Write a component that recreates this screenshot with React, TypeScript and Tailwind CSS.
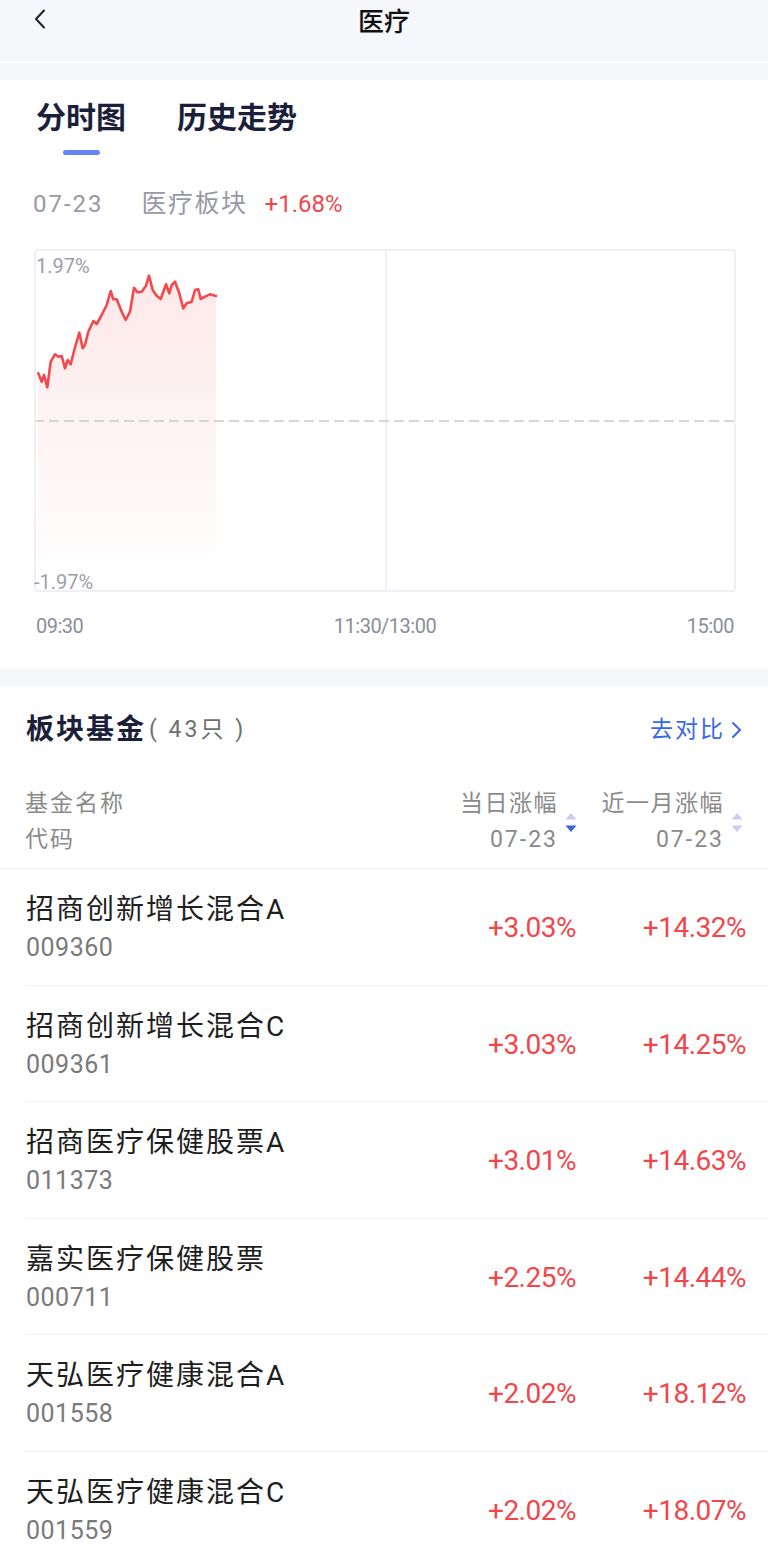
import React from "react";

const FONT = 'Roboto, "Noto Sans CJK SC", sans-serif';

const line: [number, number][] = [
  [38.3, 373.3], [41.7, 381.7], [44, 375], [47.3, 387.3], [50.7, 361.7], [55, 354.3],
  [58.3, 356.7], [61.7, 356], [65, 368.3], [67.7, 360], [70.7, 364.3], [75, 347.3],
  [79.3, 332.7], [82.7, 348.3], [85, 345], [88.3, 331.7], [93.3, 321], [96.7, 324],
  [101.7, 315], [106.7, 305], [110.7, 291], [113.3, 299.3], [116.7, 299.3], [121.7, 311.7],
  [125.7, 320], [130, 311.7], [134, 287.7], [137.3, 292.3], [141.7, 291.7], [146, 285.7],
  [149, 275.7], [152.7, 290], [156.7, 295.7], [160.7, 299], [166, 284.3], [169.3, 293.3],
  [171.7, 285], [175, 281.7], [179.3, 293.3], [183.3, 308.3], [186.7, 303.3], [191.7, 301.7],
  [195, 290], [198.3, 289.3], [200.7, 299], [205, 296.7], [210, 294.3], [216, 296],
];

const funds = [
  { name: "招商创新增长混合A", code: "009360", day: "+3.03%", month: "+14.32%" },
  { name: "招商创新增长混合C", code: "009361", day: "+3.03%", month: "+14.25%" },
  { name: "招商医疗保健股票A", code: "011373", day: "+3.01%", month: "+14.63%" },
  { name: "嘉实医疗保健股票", code: "000711", day: "+2.25%", month: "+14.44%" },
  { name: "天弘医疗健康混合A", code: "001558", day: "+2.02%", month: "+18.12%" },
  { name: "天弘医疗健康混合C", code: "001559", day: "+2.02%", month: "+18.07%" },
];

function SortArrows({ active }: { active: boolean }) {
  return (
    <svg width="12" height="21" viewBox="0 0 12 21" className="ml-[7px] shrink-0">
      <path d="M6 1 L11.5 7.5 L0.5 7.5 Z" fill="#c9cdf2" />
      <path d="M6 20 L11.5 13.5 L0.5 13.5 Z" fill={active ? "#3b60e2" : "#c9cdf2"} />
    </svg>
  );
}

function Chart() {
  const pts = line.map(([x, y]) => `${x},${y}`).join(" ");
  const area = `${pts} 216,585 38.3,585`;
  return (
    <div className="relative ml-[34px] mr-[32px] mt-[29px] h-[343px] rounded-[4px] border-2 border-[#efeff6]">
      <svg
        className="block h-full w-full"
        viewBox="36 251 698 339"
        preserveAspectRatio="none"
      >
        <defs>
          <linearGradient id="fill" x1="0" y1="0" x2="0" y2="1">
            <stop offset="0%" stopColor="#fde8e8" />
            <stop offset="100%" stopColor="#ffffff" />
          </linearGradient>
        </defs>
        <polygon points={area} fill="url(#fill)" />
        <line x1="386" y1="250" x2="386" y2="592" stroke="#efeff6" strokeWidth="2" />
        <line
          x1="34"
          y1="421"
          x2="736"
          y2="421"
          stroke="#c9c9d2"
          strokeWidth="1.6"
          strokeDasharray="10 5"
        />
        <polyline
          points={pts}
          fill="none"
          stroke="#f5474c"
          strokeWidth="2.6"
          strokeLinejoin="round"
          strokeLinecap="round"
        />
      </svg>
      <span className="absolute left-[0px] top-[4px] text-[20px] leading-[22px] text-[#9d9eab]">1.97%</span>
      <span className="absolute bottom-[-3px] left-[-2px] text-[20px] leading-[22px] text-[#9d9eab]">-1.97%</span>
    </div>
  );
}

export default function App() {
  return (
    <div className="min-h-[1559px] w-full bg-white" style={{ fontFamily: FONT }}>
      {/* nav */}
      <div className="flex h-[61px] items-start justify-between bg-[#f6f7fb]">
        <div className="w-[80px] pl-[33px] pt-[9px]">
          <svg width="14" height="20" viewBox="0 0 14 20">
            <path d="M11 1.5 L3 10 L11 18.5" fill="none" stroke="#1f2230" strokeWidth="2" strokeLinecap="round" strokeLinejoin="round" />
          </svg>
        </div>
        <div className="pt-[6px] text-[26px] font-medium leading-[32px] text-[#111]">医疗</div>
        <div className="w-[80px]" />
      </div>
      <div className="h-[2px] bg-white" />
      <div className="h-[17px] bg-[#f6f7fb]" />

      {/* chart card */}
      <div className="bg-white pb-[31px]">
        <div className="flex items-start gap-[51px] pl-[36px] pt-[18px]">
          <div className="flex flex-col items-center">
            <span className="text-[30px] font-bold leading-[40px] text-[#1b1f3b]">分时图</span>
            <span className="mt-[12px] h-[5px] w-[37px] rounded-full bg-[#6485f3]" />
          </div>
          <span className="text-[30px] font-bold leading-[40px] text-[#1b1f3b]">历史走势</span>
        </div>
        <div className="mt-[33px] flex items-center pl-[33px] text-[24px] leading-[32px]">
          <span className="tracking-[2px] text-[#9899a6]">07-23</span>
          <span className="ml-[38px] text-[25px] tracking-[1.5px] text-[#9899a6]">医疗板块</span>
          <span className="ml-[17px] text-[#f2464b]">+1.68%</span>
        </div>
        <Chart />
        <div className="mt-[22px] flex justify-between pl-[36px] pr-[34px] text-[20px] leading-[24px] tracking-[-0.5px] text-[#8b8d9a]">
          <span>09:30</span>
          <span>11:30/13:00</span>
          <span>15:00</span>
        </div>
      </div>
      <div className="h-[17px] bg-[#f6f7fb]" />

      {/* funds */}
      <div className="bg-white">
        <div className="flex items-center justify-between pl-[26px] pr-[26px] pt-[26px]">
          <div className="flex items-center leading-[36px]">
            <span className="text-[28px] font-bold tracking-[2px] text-[#1b1f3b]">板块基金</span>
            <span className="ml-[3px] text-[23px] tracking-[3px] text-[#6f6f6f]">( 43只 )</span>
          </div>
          <div className="flex items-center text-[23px] leading-[36px] tracking-[2px] text-[#3868e8]">
            <span>去对比</span>
            <svg width="12" height="18" viewBox="0 0 12 18" className="ml-[5px]">
              <path d="M3 2 L10 9 L3 16" fill="none" stroke="#3868e8" strokeWidth="2" strokeLinecap="round" strokeLinejoin="round" />
            </svg>
          </div>
        </div>

        <div className="mt-[38px] flex items-center border-b border-[#efefef] pb-[10px] pl-[25px] pr-[25px] text-[23px] leading-[36px] text-[#8a8a8a]">
          <div className="flex-1 tracking-[2px]">
            <div>基金名称</div>
            <div>代码</div>
          </div>
          <div className="flex w-[150px] items-center justify-end">
            <div className="text-right">
              <div className="tracking-[1.5px]">当日涨幅</div>
              <div className="tracking-[2px]">07-23</div>
            </div>
            <SortArrows active />
          </div>
          <div className="flex w-[166px] items-center justify-end">
            <div className="text-right">
              <div className="tracking-[1.5px]">近一月涨幅</div>
              <div className="tracking-[2px]">07-23</div>
            </div>
            <SortArrows active={false} />
          </div>
        </div>

        <div className="pl-[25px]">
          {funds.map((f) => (
            <div key={f.code} className="flex h-[116.5px] items-start border-b border-[#f1f1f1] pr-[22px]">
              <div className="flex-1 pl-[1px] pt-[25px]">
                <div className="text-[28px] leading-[32px] tracking-[2px] text-[#1e1e1e]">{f.name}</div>
                <div className="mt-[7px] text-[25px] leading-[30px] tracking-[0.5px] text-[#7a7a7a]">{f.code}</div>
              </div>
              <div className="w-[150px] pt-[43px] text-right text-[28px] leading-[32px] tracking-[-0.5px] text-[#f2464b]">
                {f.day}
              </div>
              <div className="w-[170px] pt-[43px] text-right text-[28px] leading-[32px] tracking-[-0.5px] text-[#f2464b]">
                {f.month}
              </div>
            </div>
          ))}
        </div>
      </div>
    </div>
  );
}
